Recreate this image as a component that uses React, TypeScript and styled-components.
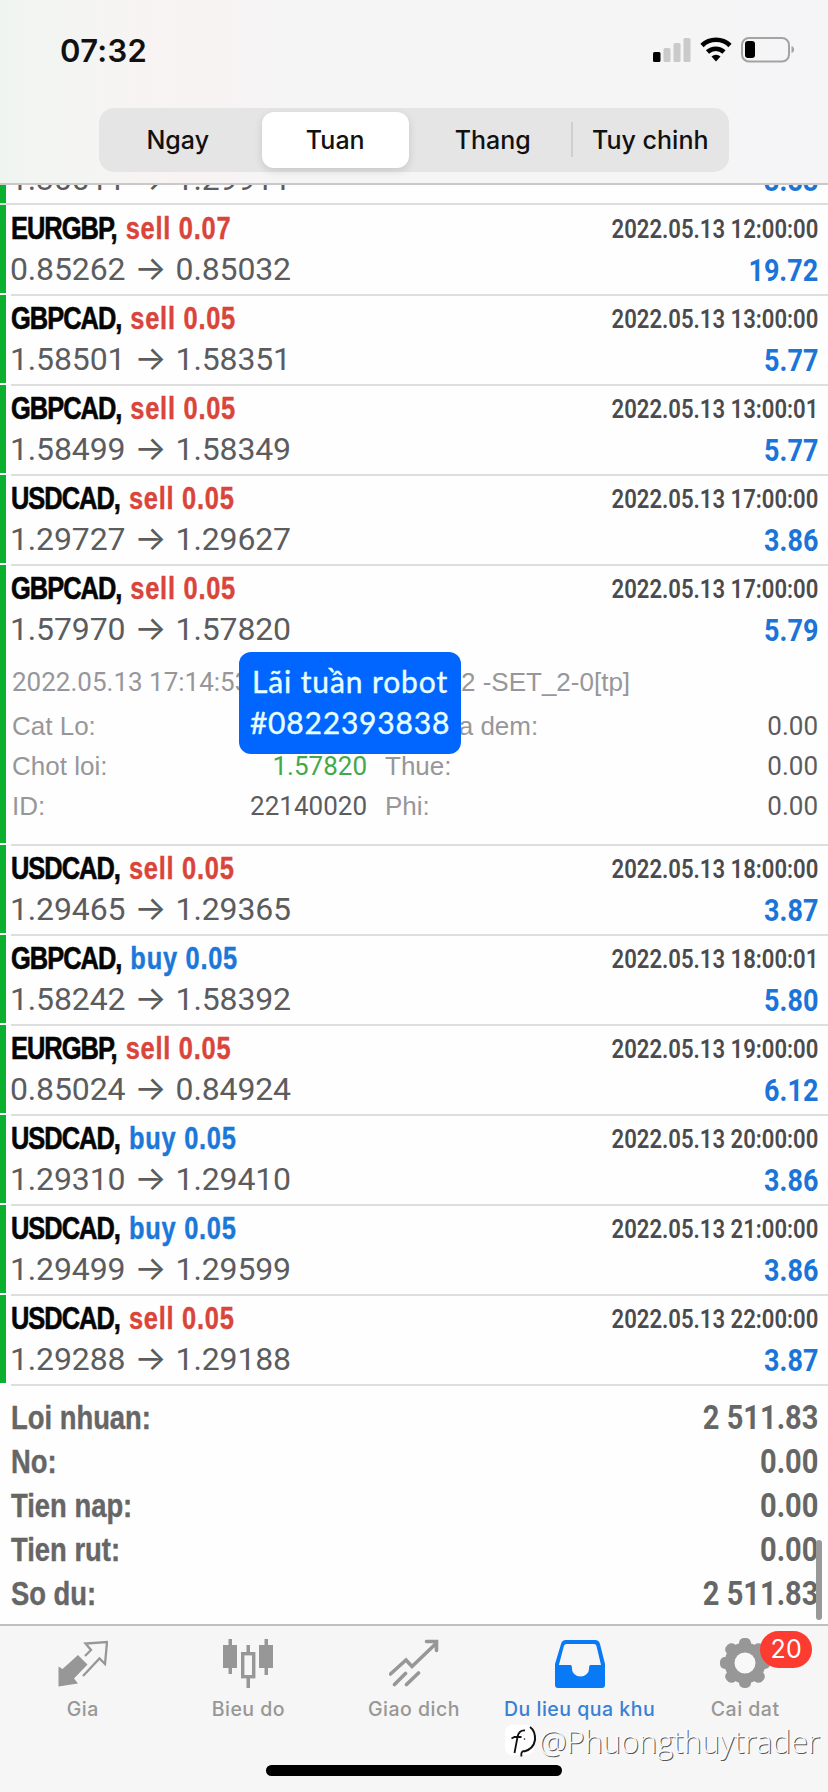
import React from "react";
import styled, { createGlobalStyle } from "styled-components";

const Global = createGlobalStyle`
  *{box-sizing:border-box}
  html,body{margin:0;padding:0;background:#fefefe}
`;

const sans = `"Liberation Sans",Arial,sans-serif`;
const digits = `Roboto,"Liberation Sans",sans-serif`;
const ui = `Inter,sans-serif`;

const Screen = styled.div`
  position: relative;
  width: 828px;
  height: 1792px;
  overflow: hidden;
  display: flex;
  flex-direction: column;
  background: #fefefe;
  font-family: ${sans};
`;
const Header = styled.header`
  height: 185px;
  flex: none;
  display: flex;
  flex-direction: column;
  align-items: center;
  border-bottom: 2px solid #c9c9c9;
  background: linear-gradient(90deg, #f0f4f0 0, #f4f5f3 90px, #f9f3f3 160px, #f8f3f3 205px, #f5f5f6 290px, #f5f5f7 100%);
`;
const StatusBar = styled.div`
  width: 100%;
  height: 108px;
  padding: 28px 32px 0 60px;
  display: flex;
  justify-content: space-between;
`;
const Clock = styled.div`
  font: 600 31px/46px ${ui};
  letter-spacing: 0.3px;
  color: #111;
`;
const Segments = styled.div`
  width: 630px;
  height: 64px;
  border-radius: 15px;
  background: #e6e5e6;
  display: grid;
  grid-template-columns: repeat(4, 1fr);
  padding: 4px 0;
`;
const Segment = styled.div<{ $on?: boolean; $line?: boolean }>`
  display: flex;
  align-items: center;
  justify-content: center;
  margin: 0 5px;
  position: relative;
  font: 500 25px/56px ${ui};
  white-space: nowrap;
  color: #111;
  border-radius: 12px;
  ${(p) => p.$on && `background:#fff; box-shadow:0 3px 8px rgba(0,0,0,.13);`}
  ${(p) => p.$line && `&::before{content:"";position:absolute;left:-6px;top:10px;width:2px;height:35px;background:#cfcfd1;}`}
`;
const List = styled.main`
  flex: none;
`;
const Item = styled.article<{ $h?: number }>`
  height: ${(p) => p.$h ?? 90}px;
  padding-left: 11px;
  position: relative;
  background: linear-gradient(#0cb02f, #0cb02f) 0 0 / 6px calc(100% - 2px) no-repeat;
  &::after {
    content: "";
    position: absolute;
    left: 11px;
    right: 0;
    bottom: -1px;
    height: 2px;
    background: #dedede;
  }
`;
const Line = styled.div<{ $h: number }>`
  display: flex;
  justify-content: space-between;
  height: ${(p) => p.$h}px;
  line-height: ${(p) => p.$h}px;
  padding-right: 10px;
  white-space: pre;
`;
const TitleLine = styled(Line)`
  padding-top: 1px;
`;
const Title = styled.div`
  font-weight: 700;
  font-size: 31px;
  transform: scaleX(0.82);
  transform-origin: left;
`;
const Pair = styled.span`
  letter-spacing: -1.2px;
  margin-right: 11px;
  color: #050505;
  -webkit-text-stroke: 0.6px #050505;
`;
const Side = styled.span<{ $buy?: boolean }>`
  letter-spacing: 0.9px;
  color: ${(p) => (p.$buy ? "#1b78d8" : "#d9453b")};
  -webkit-text-stroke: 0.4px currentColor;
`;
const When = styled.div`
  font: 600 26px ${digits};
  line-height: inherit;
  transform: scaleX(0.85);
  transform-origin: right;
  color: #4b4b4e;
`;
const Prices = styled.div`
  font-family: ${digits};
  font-size: 32px;
  font-weight: 400;
  letter-spacing: -0.15px;
  line-height: 36px;
  color: #5c5c5e;
  margin-left: -1px;
`;
const Arrow = styled.span`
  font-family: ${ui};
  font-size: 34px;
  line-height: 30px;
  margin: 0 9px;
`;
const Profit = styled.div`
  font: 700 31px ${digits};
  line-height: 40px;
  transform: scaleX(0.87);
  transform-origin: right;
  color: #1b74d8;
`;
const Cut = styled.div`
  height: 20px;
  overflow: hidden;
  display: flex;
  align-items: flex-end;
  border-bottom: 2px solid #dedede;
  background: linear-gradient(#0cb02f, #0cb02f) 0 0 / 6px 100% no-repeat;
`;
const CutRow = styled(Line)`
  width: 100%;
  padding-left: 11px;
  margin-bottom: 5px;
`;
const Detail = styled.div`
  padding-top: 10px;
  font-size: 26px;
  color: #97979a;
`;
const Comment = styled.div`
  height: 47px;
  line-height: 47px;
  padding-left: 1px;
  white-space: pre;
  display: flex;
`;
const Stamp = styled.span`
  font-family: ${digits};
  width: 240px;
`;
const CommentTail = styled.span`
  margin-left: 209px;
`;
const Grid = styled.div`
  display: grid;
  grid-template-columns: 355px 1fr;
  grid-auto-rows: 40px;
  line-height: 40px;
  column-gap: 18px;
  padding: 0 10px 0 1px;
`;
const Cell = styled.div`
  display: flex;
  justify-content: space-between;
`;
const Val = styled.span<{ $c?: string }>`
  font-family: ${digits};
  color: ${(p) => p.$c ?? "#5c5c5e"};
`;
const Sticker = styled.div`
  position: absolute;
  left: 239px;
  top: 652px;
  width: 222px;
  height: 102px;
  border-radius: 12px;
  background: #0066ff;
  color: #e6ffff;
  padding-top: 9px;
  display: flex;
  flex-direction: column;
  align-items: center;
  font: 400 30px/41px Lato, sans-serif;
  white-space: nowrap;
  -webkit-text-stroke: 0.4px #e6ffff;
`;
const StickerLine = styled.span<{ $ls: number }>`
  letter-spacing: ${(p) => p.$ls}px;
`;
const Summary = styled.section`
  height: 241px;
  padding: 11px 0 0 11px;
  border-bottom: 2px solid #c0c0c0;
  color: #666;
`;
const TotalName = styled.span`
  font-size: 33px;
  font-weight: 700;
  transform: scaleX(0.83);
  transform-origin: left;
  -webkit-text-stroke: 0.4px currentColor;
`;
const TotalValue = styled.span`
  font: 700 33px ${digits};
  line-height: inherit;
  transform: scaleX(0.88);
  transform-origin: right;
`;
const Scrollbar = styled.i`
  position: absolute;
  left: 816px;
  top: 1540px;
  width: 6px;
  height: 80px;
  border-radius: 3px;
  background: #999;
`;
const TabBar = styled.nav`
  flex: 1;
  display: grid;
  grid-template-columns: repeat(5, 1fr);
  background: #f6f6f6;
`;
const Tab = styled.div<{ $on?: boolean }>`
  display: flex;
  flex-direction: column;
  align-items: center;
  padding-top: 12px;
  position: relative;
  white-space: nowrap;
  font: 500 19.5px/28px ${ui};
  letter-spacing: 0.5px;
  color: ${(p) => (p.$on ? "#3a80d2" : "#979797")};
  svg { margin-bottom: 7px; display: block; }
`;
const Badge = styled.b`
  position: absolute;
  left: 98px;
  top: 5px;
  width: 52px;
  height: 37px;
  border-radius: 19px;
  background: #fc3c30;
  color: #fff;
  text-align: center;
  font: 400 25px/37px ${ui};
`;
const HomeBar = styled.i`
  position: absolute;
  left: 266px;
  top: 1765px;
  width: 296px;
  height: 11px;
  border-radius: 6px;
  background: #000;
`;
const Watermark = styled.div`
  position: absolute;
  left: 505px;
  top: 1721px;
  display: flex;
  align-items: center;
  gap: 2px;
  font: 300 31px/40px "Open Sans", sans-serif;
  letter-spacing: -0.1px;
  color: #fbfbfb;
  text-shadow: 1px 1px 0 #555;
  white-space: nowrap;
`;

const StatusIcons = () => (
  <svg width="146" height="40" viewBox="650 28 146 40" fill="none">
    <rect x="653" y="52" width="7.500" height="10" rx="1.500" fill="#000" />
    <rect x="663.500" y="48" width="7" height="14" rx="1.500" fill="#cacaca" />
    <rect x="673.500" y="43" width="7" height="19" rx="1.500" fill="#cacaca" />
    <rect x="683.500" y="38" width="7" height="24" rx="1.500" fill="#cacaca" />
    <path d="M702 45.500a20 20 0 0 1 28 0M707.500 52a12 12 0 0 1 16.500 0" stroke="#000" strokeWidth="4.600" />
    <path d="M711.500 56.500a6.500 6.500 0 0 1 9 0L716 61.500z" fill="#000" />
    <rect x="742" y="38" width="47" height="23.500" rx="7" stroke="#a3a3a3" strokeWidth="2" />
    <rect x="745" y="41" width="10" height="17" rx="3" fill="#000" />
    <path d="M791.500 46c3.500 1 3.500 6 0 7z" fill="#a3a3a3" />
  </svg>
);
const QuotesIcon = () => (
  <svg width="50" height="50" viewBox="57 1638 50 50">
    <path d="M57.500 1666.500l4 2.500 15.500-14 9.500 9.500-13.500 14 4 5-19.500 3z" fill="#979797" />
    <path d="M84 1656l6-6-5.500-6.500 21.500-1.500-2 22-5.500-5.500-16.500 17.500" fill="none" stroke="#979797" strokeWidth="2.300" />
  </svg>
);
const ChartIcon = () => (
  <svg width="50" height="50" viewBox="224 1638 50 50" fill="#979797">
    <path d="M229.500 1639h3.500v6h5v23h-5v6h-3.500v-6h-5.500v-23h5.500zM265.500 1639h3.500v6h5v23h-5v7h-3.500v-7h-5.500v-23h5.500zM247.500 1645h3.500v7h-3.500zM247.500 1678h3.500v10h-3.500z" />
    <rect x="243.700" y="1653.700" width="11" height="23" fill="none" stroke="#979797" strokeWidth="3.400" />
  </svg>
);
const TradeIcon = () => (
  <svg width="50" height="50" viewBox="389 1638 50 50" fill="none" stroke="#979797" strokeWidth="3.600" strokeLinecap="round">
    <path d="M390.500 1674l15.500-14 6 6.500 24-23M426.500 1641.500h10v9M394.500 1684.500l11-11M406.500 1684.500l12-11.500" />
  </svg>
);
const InboxIcon = () => (
  <svg width="50" height="50" viewBox="554 1638 50 50">
    <path
      fillRule="evenodd"
      fill="#087af5"
      d="M565 1640h29q4 0 5 4l5 20v21q0 3-3 3h-44q-3 0-3-3v-21l6-20q1-4 5-4zM565.500 1644q-2 0-2.600 2l-5 19h11.600q1.500 0 1.500 4a8.500 7.500 0 0 0 17 0q0-4 1.500-4h10.500l-4.500-19q-.5-2-2.500-2z"
    />
  </svg>
);
const GearIcon = () => (
  <svg width="52" height="50" viewBox="-26 -25 52 50" fill="#979797">
    {[0, 45, 90, 135].map((a) => (
      <rect key={a} x="-6" y="-25" width="12" height="50" rx="5" transform={`rotate(${a})`} />
    ))}
    <circle r="15.500" fill="none" stroke="#979797" strokeWidth="10" />
    <circle r="10.500" fill="#f8f8f8" />
  </svg>
);
const Logo = () => (
  <svg width="32" height="34" viewBox="505 1727 32 34" fill="none" stroke="#111">
    <path d="M512 1728h14q8 0 8 8v14q0 8-9 8h-12q-8 0-8-8v-14q0-8 7-8z" fill="#fff" stroke="none" />
    <path d="M514.500 1756l3-16q1.500-7 7.500-6.500M511.500 1741.500l3-1.500h7M521.500 1759.500q-1-5 2.500-5.500" strokeWidth="1.800" />
    <path d="M530 1730q5.500 4 5 13-1.500 9-11 11.500" strokeWidth="2" />
    <circle cx="524.500" cy="1742" r=".8" fill="#111" stroke="none" />
  </svg>
);

type Trade = [string, string, string, string, string, string];
const before: Trade[] = [
  ["EURGBP", "sell 0.07", "0.85262", "0.85032", "12:00:00", "19.72"],
  ["GBPCAD", "sell 0.05", "1.58501", "1.58351", "13:00:00", "5.77"],
  ["GBPCAD", "sell 0.05", "1.58499", "1.58349", "13:00:01", "5.77"],
  ["USDCAD", "sell 0.05", "1.29727", "1.29627", "17:00:00", "3.86"],
];
const opened: Trade = ["GBPCAD", "sell 0.05", "1.57970", "1.57820", "17:00:00", "5.79"];
const after: Trade[] = [
  ["USDCAD", "sell 0.05", "1.29465", "1.29365", "18:00:00", "3.87"],
  ["GBPCAD", "buy 0.05", "1.58242", "1.58392", "18:00:01", "5.80"],
  ["EURGBP", "sell 0.05", "0.85024", "0.84924", "19:00:00", "6.12"],
  ["USDCAD", "buy 0.05", "1.29310", "1.29410", "20:00:00", "3.86"],
  ["USDCAD", "buy 0.05", "1.29499", "1.29599", "21:00:00", "3.86"],
  ["USDCAD", "sell 0.05", "1.29288", "1.29188", "22:00:00", "3.87"],
];
const totals = [
  ["Loi nhuan:", "2 511.83"],
  ["No:", "0.00"],
  ["Tien nap:", "0.00"],
  ["Tien rut:", "0.00"],
  ["So du:", "2 511.83"],
];

const TradeItem = ({ t, h, children }: { t: Trade; h?: number; children?: React.ReactNode }) => (
  <Item $h={h}>
    <TitleLine $h={46}>
      <Title>
        <Pair>{t[0]},</Pair>
        <Side $buy={t[1].startsWith("buy")}>{t[1]}</Side>
      </Title>
      <When>2022.05.13 {t[4]}</When>
    </TitleLine>
    <Line $h={38}>
      <Prices>{t[2]}<Arrow>→</Arrow>{t[3]}</Prices>
      <Profit>{t[5]}</Profit>
    </Line>
    {children}
  </Item>
);

export default function App() {
  return (
    <Screen>
      <Global />
      <Header>
        <StatusBar>
          <Clock>07:32</Clock>
          <StatusIcons />
        </StatusBar>
        <Segments>
          <Segment>Ngay</Segment>
          <Segment $on>Tuan</Segment>
          <Segment>Thang</Segment>
          <Segment $line>Tuy chinh</Segment>
        </Segments>
      </Header>
      <List>
        <Cut>
          <CutRow $h={37}>
            <Prices>1.30011<Arrow>→</Arrow>1.29911</Prices>
            <Profit>3.83</Profit>
          </CutRow>
        </Cut>
        {before.map((t, i) => <TradeItem key={i} t={t} />)}
        <TradeItem t={opened} h={280}>
          <Detail>
            <Comment>
              <Stamp>2022.05.13 17:14:53</Stamp>
              <CommentTail>2 -SET_2-0[tp]</CommentTail>
            </Comment>
            <Grid>
              <Cell>Cat Lo:</Cell>
              <Cell>Phi qua dem:<Val>0.00</Val></Cell>
              <Cell>Chot loi:<Val $c="#43a84a">1.57820</Val></Cell>
              <Cell>Thue:<Val>0.00</Val></Cell>
              <Cell>ID:<Val>22140020</Val></Cell>
              <Cell>Phi:<Val>0.00</Val></Cell>
            </Grid>
          </Detail>
        </TradeItem>
        {after.map((t, i) => <TradeItem key={i} t={t} />)}
      </List>
      <Summary>
        {totals.map(([k, v]) => (
          <Line $h={44} key={k}><TotalName>{k}</TotalName><TotalValue>{v}</TotalValue></Line>
        ))}
      </Summary>
      <TabBar>
        <Tab><QuotesIcon />Gia</Tab>
        <Tab><ChartIcon />Bieu do</Tab>
        <Tab><TradeIcon />Giao dich</Tab>
        <Tab $on><InboxIcon />Du lieu qua khu</Tab>
        <Tab><GearIcon />Cai dat<Badge>20</Badge></Tab>
      </TabBar>
      <Sticker>
        <StickerLine $ls={0.9}>Lãi tuần robot</StickerLine>
        <StickerLine $ls={0.8}>#0822393838</StickerLine>
      </Sticker>
      <Scrollbar />
      <Watermark><Logo />@Phuongthuytrader</Watermark>
      <HomeBar />
    </Screen>
  );
}
